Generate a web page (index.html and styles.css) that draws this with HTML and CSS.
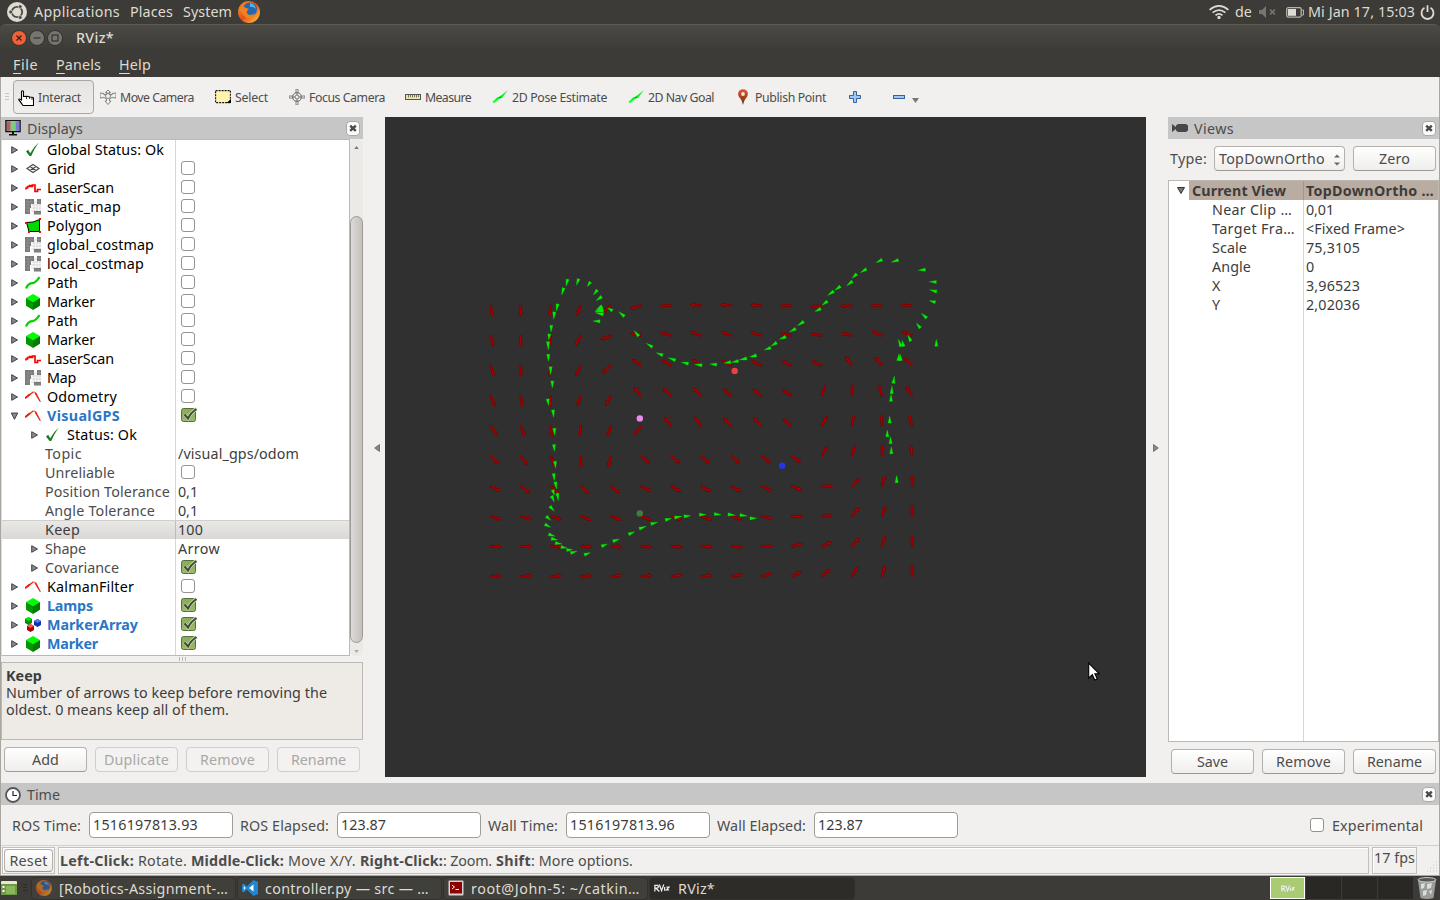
FILE: index.html
```html
<!DOCTYPE html>
<html lang="en">
<head>
<meta charset="utf-8">
<title>RViz*</title>
<link rel="stylesheet" href="styles.css">
</head>
<body>
<svg class="defs" aria-hidden="true">
  <defs>
    <linearGradient id="flame" x1="0" y1="0" x2="1" y2="1"><stop offset="0" stop-color="#f7931e"/><stop offset=".5" stop-color="#e8501b"/><stop offset="1" stop-color="#ffd23c"/></linearGradient>
    <linearGradient id="pinFill" x1="0" y1="0" x2="0" y2="1"><stop offset="0" stop-color="#e8532f"/><stop offset="1" stop-color="#5a3510"/></linearGradient>
    <linearGradient id="okFill" x1="0" y1="0" x2="0" y2="1"><stop offset="0" stop-color="#8aa95c"/><stop offset="1" stop-color="#9cbb6c"/></linearGradient>
  </defs>
  <symbol id="i-check" viewBox="0 0 16 16"><path d="M1 9.500L3.200 7.800L5.200 11.200Q9 4.500 13.800 .5Q9 7 6.200 14L4.600 14Z" fill="#1d7a1d"/></symbol>
  <symbol id="i-grid" viewBox="0 0 16 16"><path d="M8 3.500L14 7.500L8 11.500L2 7.500ZM5 5.500L11 9.500M11 5.500L5 9.500" fill="none" stroke="#4a4a4a" stroke-width="1.200"/></symbol>
  <symbol id="i-laser" viewBox="0 0 16 16"><path d="M1 9.500V8H2.500V6.500H4.500V5.500H6V6.500H7.500V5H10V11.500H12.500V9.500H16" fill="none" stroke="#f00" stroke-width="1.700"/></symbol>
  <symbol id="i-map" viewBox="0 0 16 16"><path d="M9 3H12M7 6H16M6 9H16M6 12H16M9 3V15M12 5V13M15 5V13" stroke="#ccc" stroke-width=".7"/><path d="M0 0H9V5H6V9H5V15H0ZM12 0H16V5H12ZM9 12H16V15.500H9Z" fill="#787878"/><path d="M0 3H9M0 6H6M0 9H5M0 12H5M3 0V15M6 0V5M12 2.500H16M14 0V5M9 14H16" stroke="#9c9c9c" stroke-width=".5"/></symbol>
  <symbol id="i-poly" viewBox="0 0 16 16"><path d="M1.500 4.500Q8 5 14.500 1.500V13.500H4Z" fill="#00d800" stroke="#000"/><path d="M0 4H2V6H0ZM14 0H16V2H14ZM3 13H5V15H3ZM14 13H16V15H14Z" fill="#f00"/></symbol>
  <symbol id="i-path" viewBox="0 0 16 16"><path d="M1 13.500Q3 8.500 7 8.200T14.500 2" fill="none" stroke="#00d400" stroke-width="2.300"/></symbol>
  <symbol id="i-cube" viewBox="0 0 16 16"><path d="M8 0L15 4L8 8L1 4Z" fill="#0f0"/><path d="M1 4L8 8V16L1 11.800Z" fill="#009800"/><path d="M15 4L8 8V16L15 11.800Z" fill="#007c00"/></symbol>
  <symbol id="i-odom" viewBox="0 0 16 16"><path d="M.5 9L8.500 2.800" stroke="#e8210c" stroke-width="1.200"/><path d="M9 2.200L11.500 4L16 13L14.500 12.500L10 5Z" fill="#e8210c"/><path d="M0 9.200L5 5.300" stroke="#e8210c" stroke-width="1.900"/></symbol>
  <symbol id="i-cubes" viewBox="0 0 16 16"><path d="M3.500 0L7 2V6L3.500 8L0 6V2Z" fill="#009000"/><path d="M3.500 0L7 2L3.500 4L0 2Z" fill="#0e0"/><path d="M12.500 2L16 4V8L12.500 10L9 8V4Z" fill="#13a"/><path d="M12.500 2L16 4L12.500 6L9 4Z" fill="#57f"/><path d="M5.500 7L9 9V13L5.500 15L2 13V9Z" fill="#a00"/><path d="M5.500 7L9 9L5.500 11L2 9Z" fill="#f55"/></symbol>
  <symbol id="i-x" viewBox="0 0 14 15"><rect x=".5" y=".5" width="13" height="14" rx="3.500" fill="#fbfbfa" stroke="#a9a9a9"/><path d="M4.200 4.700L9.800 9.800M9.800 4.700L4.200 9.800" stroke="#4a4a4a" stroke-width="2.500"/></symbol>
  <symbol id="i-nav" viewBox="0 0 16 16"><path d="M.5 13L5.500 8L7 8L15.800 1.300L10 9L8 9.300L2 14Z" fill="#0f2"/><path d="M6 8.500L9.500 7L8.500 9.500Z" fill="#0a0"/></symbol>
  <symbol id="i-fox" viewBox="0 0 22 22"><circle cx="11" cy="11" r="11" fill="url(#flame)"/><circle cx="12" cy="8.500" r="7" fill="#2566ad"/><path d="M12 2Q17 3 18 8Q15 5 12 6Z" fill="#5db0e4"/><path d="M1 6Q5 4 8 7L11 8L9 10Q8 13 12 14Q15 14 17 12Q15 18 9 17Q3 14 1 6Z" fill="#f08020"/></symbol>
  <symbol id="i-rviz" viewBox="0 0 18 10"><path d="M1 9V2H4Q6 3 4 5H2L6 9M6 1L8.500 8L11 1M12 4V8M14 4H17L14 7H17" fill="none" stroke="#eee" stroke-width="1.400"/></symbol>
</svg>

<header class="panel">
  <svg class="ubuntu" viewBox="0 0 20 20"><circle cx="10" cy="10" r="10" fill="#dfdbd2"/><circle cx="10" cy="10" r="5.200" fill="none" stroke="#4a4945" stroke-width="1.800"/><path d="M10 10L2 10M10 10L14 3M10 10L14 17" stroke="#dfdbd2" stroke-width="1"/><g fill="#4a4945" stroke="#dfdbd2" stroke-width=".7"><circle cx="3.700" cy="10" r="1.900"/><circle cx="13.200" cy="4.600" r="1.900"/><circle cx="13.200" cy="15.400" r="1.900"/></g></svg>
  <span class="fit m-apps" data-w="86">Applications</span>
  <span class="fit m-places" data-w="43">Places</span>
  <span class="fit m-system" data-w="49">System</span>
  <svg class="fox" viewBox="0 0 22 22"><use href="#i-fox"/></svg>
  <div class="tray">
    <svg width="20" height="14" viewBox="0 0 20 14" fill="none" stroke="#dfdbd2" stroke-width="1.700"><path d="M.6 4.800Q10-3 19.400 4.800M3.600 7.700Q10 2.400 16.400 7.700M6.500 10.400Q10 7.200 13.500 10.400"/><circle cx="10" cy="12.500" r=".8"/></svg>
    <span class="fit" data-w="17">de</span>
    <svg class="snd" width="18" height="12" viewBox="0 0 18 12"><path d="M0 4H3L7 0V12L3 8H0Z" fill="#77756f"/><path d="M11 3.500L16 8.500M16 3.500L11 8.500" stroke="#77756f" stroke-width="1.700"/></svg>
    <svg class="bat" width="18" height="11" viewBox="0 0 18 11"><rect x=".7" y=".7" width="14.500" height="9.400" rx="1.500" fill="none" stroke="#b5b2aa" stroke-width="1.300"/><rect x="2" y="2" width="8" height="6.800" fill="#dfdbd2"/><path d="M16 3H17.500V8H16" fill="none" stroke="#b5b2aa"/></svg>
    <span class="fit" data-w="107">Mi Jan 17, 15:03</span>
    <svg class="pow" width="15" height="15" viewBox="0 0 15 15" fill="none" stroke="#dfdbd2" stroke-width="1.800"><path d="M4.500 2.800A6 6 0 1 0 10.500 2.800M7.500 .3V7"/></svg>
  </div>
</header>

<div class="titlebar">
  <svg width="53" height="16" viewBox="0 0 53 16"><circle cx="8" cy="8" r="7.500" fill="#ee6139" stroke="#33322e"/><path d="M5.500 5.500L10.500 10.500M10.500 5.500L5.500 10.500" stroke="#3a2018" stroke-width="1.200"/><g fill="#77766e" stroke="#33322e"><circle cx="26" cy="8" r="7.500"/><circle cx="44" cy="8" r="7.500"/></g><path d="M22.500 8H29.500" stroke="#33322e" stroke-width="1.200"/><rect x="41" y="5" width="6" height="6" fill="none" stroke="#33322e" stroke-width="1.200"/></svg>
  <span class="fit" data-w="38">RViz*</span>
</div>
<nav class="menubar">
  <span class="fit" data-w="25"><u>F</u>ile</span>
  <span class="fit" data-w="45"><u>P</u>anels</span>
  <span class="fit" data-w="32"><u>H</u>elp</span>
</nav>

<main class="window">
  <div class="toolbar">
    <div class="grip"></div>
    <div class="tool active"><svg viewBox="0 0 16 16"><path d="M3.500 9V1.500Q4.500 0 5.500 1.500V6.500L9 6.200L12 7L15 7.500Q15.800 8 15.500 10V15.500H5L1 10Q0 8 3.500 10Z" fill="#fff" stroke="#000" stroke-width="1.100"/><path d="M8.500 6.500V9M11.500 7V9M14 7.500V10M1 10L4 14" stroke="#000" stroke-width=".8"/></svg><span class="fit" data-w="43">Interact</span></div>
    <div class="tool"><svg viewBox="0 0 16 16" fill="none" stroke="#777" stroke-width=".9"><path d="M8 1L10.500 3.500H9V5L12 6V4.500L16 4V9L12 8.500L9.500 10V12H11L8 15.500L5 12H6.500V10L4 8.500L0 9V4L4 4.500V6L7 5V3.500H5.500Z"/><circle cx="8" cy="7" r="2.500"/></svg><span class="fit" data-w="74">Move Camera</span></div>
    <div class="tool"><svg viewBox="0 0 16 16"><rect x=".6" y="1.600" width="14.800" height="12" fill="#fff3ae" stroke="#111" stroke-width="1.100" stroke-dasharray="2 1"/><path d="M16 10V14H11.500Z"/></svg><span class="fit" data-w="33">Select</span></div>
    <div class="tool snug"><svg viewBox="0 0 16 16" fill="none" stroke="#777"><circle cx="8" cy="8" r="4.500"/><circle cx="8" cy="8" r="2" /><path d="M7 0H9V5H7ZM7 11H9V16H7ZM0 7H5V9H0ZM11 7H16V9H11Z" stroke-width=".9"/></svg><span class="fit" data-w="76">Focus Camera</span></div>
    <div class="tool"><svg viewBox="0 0 16 16"><rect x=".5" y="5.500" width="15" height="5" fill="#efe5a0" stroke="#555"/><path d="M3.500 6V8.500M5.500 6V8M7.500 6V8.500M9.500 6V8M11.500 6V8.500M13.500 6V8" stroke="#555" stroke-width=".8"/></svg><span class="fit" data-w="46">Measure</span></div>
    <div class="tool"><svg viewBox="0 0 16 16"><use href="#i-nav"/></svg><span class="fit" data-w="95">2D Pose Estimate</span></div>
    <div class="tool"><svg viewBox="0 0 16 16"><use href="#i-nav"/></svg><span class="fit" data-w="66">2D Nav Goal</span></div>
    <div class="tool"><svg viewBox="0 0 16 16"><path d="M8 16Q6.800 10.500 4 8Q2 4 4.500 1.500Q8-1 11.500 1.500Q14 4 12 8Q9.200 10.500 8 16Z" fill="url(#pinFill)"/><circle cx="8" cy="5" r="1.900" fill="#f3e5df"/></svg><span class="fit" data-w="71">Publish Point</span></div>
    <svg class="plus" viewBox="0 0 12 12"><path d="M4.500 .5H7.500V4.500H11.500V7.500H7.500V11.500H4.500V7.500H.5V4.500H4.500Z" fill="#a9c6ea" stroke="#2f62aa"/></svg>
    <svg class="minus" viewBox="0 0 12 4"><rect x=".5" y=".5" width="11" height="3" fill="#a9c6ea" stroke="#2f62aa"/></svg>
    <svg class="drop" viewBox="0 0 7 5"><path d="M0 0H7L3.500 5Z" fill="#777"/></svg>
  </div>

  <div class="middle">
    <section class="dock left">
      <div class="dockhead"><svg width="16" height="16" viewBox="0 0 16 16"><rect x="1" y=".5" width="14" height="11" fill="#fff" stroke="#111" stroke-width="1.500"/><rect x="1.800" y="1.300" width="4" height="9.500" fill="#b65c66"/><rect x="5.800" y="1.300" width="4.500" height="9.500" fill="#77d077"/><rect x="10.300" y="1.300" width="4" height="9.500" fill="#7b7bd6"/><path d="M7 12H9V14H12V15.500H4V14H7Z" fill="#111"/></svg><span class="fit" data-w="56">Displays</span><svg class="close" viewBox="0 0 14 15"><use href="#i-x"/></svg></div>
      <div class="treewrap">
        <div class="tree" id="displays"></div>
        <div class="scroll"><svg viewBox="0 0 6 4"><path d="M0 4H6L3 0Z" fill="#777"/></svg><div class="thumb"></div><svg viewBox="0 0 6 4"><path d="M0 0H6L3 4Z" fill="#aaa"/></svg></div>
      </div>
      <div class="split"><i></i><i></i><i></i></div>
      <div class="help">
        <b class="fit" data-w="36">Keep</b>
        <span class="fit" data-w="321">Number of arrows to keep before removing the</span>
        <span class="fit" data-w="223">oldest. 0 means keep all of them.</span>
      </div>
      <div class="buttons">
        <div class="btn"><span class="fit" data-w="27">Add</span></div>
        <div class="btn off"><span class="fit" data-w="65">Duplicate</span></div>
        <div class="btn off"><span class="fit" data-w="55">Remove</span></div>
        <div class="btn off"><span class="fit" data-w="55">Rename</span></div>
      </div>
    </section>
    <div class="gutter"><svg class="gl" viewBox="0 0 6 8"><path d="M5.500 .5V7.500L.7 4Z" fill="#888" stroke="#555" stroke-width=".7"/></svg></div>
    <svg class="scene" id="scene" viewBox="385 117 761 660"></svg>
    <div class="gutter"><svg class="gr" viewBox="0 0 6 8"><path d="M.5 .5V7.500L5.300 4Z" fill="#888" stroke="#555" stroke-width=".7"/></svg></div>
    <section class="dock right">
      <div class="dockhead"><svg width="16" height="16" viewBox="0 0 16 16"><path d="M0 4L4 7V5.500L6 4H14L16 5.500V10.500L14 12H6L4 10.500V9L0 12Z" fill="#484848"/></svg><span class="fit" data-w="40">Views</span><svg class="close" viewBox="0 0 14 15"><use href="#i-x"/></svg></div>
      <div class="typerow">
        <span class="fit" data-w="37">Type:</span>
        <div class="btn combo"><span class="fit" data-w="106">TopDownOrtho</span><svg viewBox="0 0 6 12"><path d="M0 3.500H6L3 .5ZM0 8.500H6L3 11.500Z" fill="#666"/></svg></div>
        <div class="btn"><span class="fit" data-w="31">Zero</span></div>
      </div>
      <div class="props" id="views"></div>
      <div class="buttons">
        <div class="btn"><span class="fit" data-w="31">Save</span></div>
        <div class="btn"><span class="fit" data-w="55">Remove</span></div>
        <div class="btn"><span class="fit" data-w="55">Rename</span></div>
      </div>
    </section>
  </div>

  <div class="dockhead time"><svg width="16" height="16" viewBox="0 0 16 16"><circle cx="8" cy="8" r="7" fill="#fff" stroke="#555" stroke-width="1.800"/><path d="M8 4V8.500H12" fill="none" stroke="#222" stroke-width="1.200"/></svg><span class="fit" data-w="33">Time</span><svg class="close" viewBox="0 0 14 15"><use href="#i-x"/></svg></div>
  <div class="timerow">
    <span class="fit" data-w="69">ROS Time:</span><div class="field"><span class="fit" data-w="105">1516197813.93</span></div>
    <span class="fit" data-w="89">ROS Elapsed:</span><div class="field"><span class="fit" data-w="45">123.87</span></div>
    <span class="fit" data-w="70">Wall Time:</span><div class="field"><span class="fit" data-w="105">1516197813.96</span></div>
    <span class="fit" data-w="89">Wall Elapsed:</span><div class="field"><span class="fit" data-w="45">123.87</span></div>
    <span class="box exp"></span><span class="fit" data-w="91">Experimental</span>
  </div>
  <div class="status">
    <div class="cell reset"><div class="btn"><span class="fit" data-w="38">Reset</span></div></div>
    <div class="cell msg"><b class="fit" data-w="74">Left-Click:</b><span class="fit" data-w="49">Rotate.</span><b class="fit" data-w="93">Middle-Click:</b><span class="fit" data-w="68">Move X/Y.</span><b class="fit tight" data-w="83">Right-Click:</b><span class="fit" data-w="49">: Zoom.</span><b class="fit tight" data-w="35">Shift</b><span class="fit" data-w="102">: More options.</span></div>
    <div class="cell fps"><span class="fit" data-w="41">17 fps</span></div>
    <svg class="sizer" viewBox="0 0 12 12"><path d="M10 1H12M7 4H12M4 7H12M1 10H12" stroke="#cbc9c5" stroke-dasharray="1 2"/></svg>
  </div>
</main>

<footer class="taskbar">
  <svg class="desk" viewBox="0 0 16 14"><rect x="0" y="0" width="16" height="14" rx="1" fill="#e9e6d4"/><rect x="0" y="3" width="16" height="11" fill="#6f9a45"/><rect x="5" y="5" width="9" height="8" fill="#8bb75c"/><path d="M1.500 5H3.500V7H1.500ZM1.500 9H3.500V11H1.500Z" fill="#fff"/></svg>
  <div class="grip dark"></div>
  <div class="task"><svg class="dim" viewBox="0 0 22 22"><use href="#i-fox"/></svg><span class="fit" data-w="169">[Robotics-Assignment-…</span></div>
  <div class="task"><svg viewBox="0 0 16 16"><path d="M11.500 0L16 2V14L11.500 16L5 9.800L1.500 12.500L0 11.500V4.500L1.500 3.500L5 6.200Z" fill="#1f86d2"/><path d="M11.500 4.500V11.500L7 8ZM1.800 6V10L3.800 8Z" fill="#fff"/></svg><span class="fit" data-w="164">controller.py — src — …</span></div>
  <div class="task"><svg viewBox="0 0 16 16"><rect x=".6" y=".6" width="14.800" height="14.800" rx="1" fill="#ddd" stroke="#888"/><rect x="2" y="2" width="12" height="11.500" fill="#8d0000"/><path d="M4 5L6.500 7L4 9M7.500 9.500H11" fill="none" stroke="#fff"/></svg><span class="fit" data-w="169">root@John-5: ~/catkin…</span></div>
  <div class="task cur"><svg class="rv" viewBox="0 0 18 10"><use href="#i-rviz"/></svg><span class="fit" data-w="37">RViz*</span></div>
  <div class="spaces"><div class="ws on"><svg viewBox="0 0 18 10"><use href="#i-rviz"/></svg></div><div class="ws"></div><div class="ws"></div><div class="ws"></div></div>
  <svg class="trash" viewBox="0 0 20 22"><path d="M1 3L3.500 21Q10 23 16.500 21L19 3Z" fill="#9a9c9a"/><ellipse cx="10" cy="2.800" rx="9" ry="2.200" fill="#555" stroke="#ccc"/><path d="M4 7L8 6L7 11L4 12ZM10 7L15 6L14 11L10 12ZM6 14L10 13L9 18L6 19ZM12 14L15 13L14 18Z" fill="#dcdedc"/></svg>
</footer>
<svg class="cursor" viewBox="0 0 12 19"><path d="M.7 1V16L4.300 12.700L6.800 18L9.300 16.900L6.900 11.800H11.300Z" fill="#fff" stroke="#000" stroke-width="1.100"/></svg>
<script src="app.js"></script>
</body>
</html>
```
FILE: styles.css
```css
* { box-sizing: border-box; }
body { margin: 0; width: 1440px; height: 900px; overflow: hidden; display: flex; flex-direction: column; background: #3c3b37; font: 14.3px/19px "Noto Sans", "Open Sans", sans-serif; color: #4c4c4c; }
svg { flex: none; display: block; }
.defs { position: absolute; width: 0; height: 0; }
.fit { display: inline-block; white-space: nowrap; flex: none; }

.panel { height: 24px; flex: none; display: flex; align-items: center; padding: 0 5px 0 7px; color: #dfdbd2; }
.panel .fit { padding-bottom: 2px; }
.ubuntu { width: 20px; height: 20px; margin-right: 7px; }
.m-apps { margin-right: 10px; }
.m-places { margin-right: 10px; }
.m-system { margin-right: 6px; }
.fox { width: 22px; height: 22px; }
.tray { margin-left: auto; display: flex; align-items: center; }
.tray .fit { margin-left: 6px; }
.snd { margin-left: 7px; }
.bat { margin: 0 -2px 0 9px; }
.pow { margin-left: 5px; }

.titlebar { height: 26px; flex: none; display: flex; align-items: center; gap: 12px; padding-left: 11px; border-top: 1px solid #5b5a54; border-radius: 6px 6px 0 0; background: linear-gradient(#4b4a44, #3c3b37); color: #dfdbd2; font-weight: 500; }
.menubar { height: 27px; flex: none; display: flex; align-items: center; gap: 18px; padding: 2px 0 0 13px; color: #dfdbd2; }
.menubar u { text-underline-offset: 3px; }

.window { height: 799px; flex: none; border-left: 1px solid #a9a6a0; border-right: 1px solid #a9a6a0; border-bottom: 1px solid #a9a6a0; background: #f1f0ee; display: flex; flex-direction: column; }
.toolbar { height: 40px; flex: none; display: flex; align-items: center; font-size: 12.3px; }
.grip { width: 4px; height: 8px; margin: 0 4px; background: repeating-linear-gradient(#c8c6c2 0 1px, transparent 1px 3px); }
.tool { display: flex; align-items: center; gap: 4px; margin-right: 21px; }
.tool.snug { margin-right: 20px; }
.tool svg { width: 16px; height: 16px; }
.tool.active { width: 81px; height: 34px; padding: 1px 0 0 4px; margin-right: 6px; border: 1px solid #aaa7a2; border-radius: 4px; background: linear-gradient(#e5e4e2, #efeeec); }
.plus { width: 12px; height: 12px; margin-left: 2px; }
.minus { width: 12px; height: 4px; margin-left: 32px; }
.drop { width: 7px; height: 5px; margin: 6px 0 0 7px; }

.middle { height: 666px; flex: none; display: flex; }
.dock { display: flex; flex-direction: column; }
.left { width: 362px; }
.right { width: 271px; }
.dockhead { height: 22px; flex: none; display: flex; align-items: center; gap: 6px; padding: 0 3px 0 4px; background: #c6c6c6; }
.dockhead .close { width: 14px; height: 15px; margin-left: auto; }
.treewrap { height: 517px; display: flex; }
.tree { width: 349px; border: 1px solid #bcb9b5; border-left-color: #ddd; background: linear-gradient(90deg, transparent 173px, #d8d6d3 173px 174px, transparent 174px) #fff; }
.row { height: 19px; display: flex; align-items: center; }
.row.sel { background: linear-gradient(90deg, transparent 173px, #bfbdb9 173px 174px, transparent 174px), linear-gradient(#e9e8e6, #d9d8d5); border-top: 1px solid #d0ceca; }
.name { width: 174px; flex: none; display: flex; align-items: center; }
.name .fit, .val .fit { position: relative; top: -.5px; }
.val .fit, .sel .fit { color: #3c3c3c; }
.tri { width: 7px; height: 8px; margin: 0 7px 0 9px; }
.deep .tri { margin: 0 7px 0 29px; }
.ico { width: 16px; height: 16px; margin-right: 6px; }
.top { color: #000; }
.on-name { color: #2a76c6; font-weight: bold; }
.val { padding-left: 2px; display: flex; align-items: center; }
.box { width: 14px; height: 14px; flex: none; border: 1px solid #96938f; border-radius: 3px; background: #fff; }
.val .box { margin: -1px 0 0 3px; }
.val .tick { width: 17px; height: 16px; margin: -2px 0 0 3px; }
.scroll { width: 13px; display: flex; flex-direction: column; align-items: center; background: #eceae7; border-radius: 6px; }
.scroll svg { width: 5px; height: 3px; margin: 7px 0 5px; }
.thumb { width: 13px; height: 427px; flex: none; margin-top: 62px; border: 1px solid #9d9993; border-radius: 7px; background: linear-gradient(90deg, #dddad7, #c4c0bb); }
.split { height: 6px; display: flex; justify-content: center; gap: 2px; padding-top: 1px; }
.split i { width: 1px; height: 4px; background: #bbb9b5; }
.help { height: 78px; padding: 4px; border: 1px solid #bcb9b5; background: #eeebe7; line-height: 17px; color: #3c3c3c; display: flex; flex-direction: column; align-items: flex-start; }
.buttons { display: flex; gap: 8px; padding: 7px 3px 0; }
.btn { width: 83px; height: 25px; display: flex; align-items: center; justify-content: center; border: 1px solid #b4b1ad; border-bottom-color: #9c9995; border-radius: 4px; background: linear-gradient(#fff, #efeeec); }
.btn.off { color: #a9a8a6; border-color: #d0ceca; background: #f3f2f0; }
.gutter { width: 22px; flex: none; }
.gl { width: 6px; height: 8px; margin: 327px 0 0 11px; }
.gr { width: 6px; height: 8px; margin: 327px 0 0 7px; }
.scene { width: 761px; height: 660px; background: #303030; }

.typerow { height: 41px; display: flex; align-items: center; padding: 0 0 2px 2px; }
.combo { width: 131px; margin: 0 8px 0 7px; justify-content: space-between; padding: 0 4px; }
.combo svg { width: 6px; height: 12px; margin-top: 3px; }
.props { height: 562px; border: 1px solid #bcb9b5; background: linear-gradient(90deg, transparent 134px, #d8d6d3 134px 135px, transparent 135px) #fff; color: #3c3c3c; }
.prow { height: 19px; display: flex; align-items: center; }
.pname { width: 137px; padding-left: 43px; flex: none; }
.prow.head { font-weight: bold; margin-left: 20px; background: linear-gradient(90deg, transparent 114px, #a3978e 114px 115px, transparent 115px) #bbaca2; }
.prow.head svg { width: 8px; height: 7px; margin-left: -12px; margin-right: 4px; }
.prow.head .pname { width: 117px; padding-left: 3px; }

.time { padding-top: 1px; }
.timerow { height: 40px; flex: none; display: flex; align-items: center; padding-left: 11px; }
.field { width: 144px; height: 26px; margin: 0 7px 1px 8px; padding: 2px 4px 2px 3px; border: 1px solid #9f9b96; border-radius: 4px; background: #fff; color: #3c3c3c; }
.exp { margin: 0 8px 1px 345px; }
.status { height: 30px; flex: none; display: flex; padding: 1px 0 1px 1px; border-top: 1px solid #d2d0cd; align-items: flex-start; }
.cell { height: 27px; border: 1px solid #c2c0bc; box-shadow: inset 1px 1px #fff; display: flex; align-items: center; }
.reset { width: 53px; padding-left: 1px; margin-right: 3px; }
.reset .btn { width: 49px; height: 23px; }
.msg { width: 1311px; padding-left: 1px; gap: 4px; margin-right: 3px; }
.tight { margin-right: -4px; }
.fps { width: 45px; padding: 0 0 7px 1px; }
.sizer { width: 12px; height: 12px; margin: 14px 0 0 9px; }

.taskbar { height: 24px; flex: none; display: flex; align-items: center; background: #3c3b37; color: #dfdbd2; }
.desk { width: 16px; height: 14px; margin-left: 1px; }
.grip.dark { margin: 0 4px 0 6px; background: repeating-linear-gradient(#2b2a27 0 1px, transparent 1px 3px); }
.task { width: 205px; height: 23px; margin-right: 1px; display: flex; align-items: center; gap: 7px; padding-left: 4px; border: 1px solid #32312d; border-radius: 4px; background: #403f3a; }
.task svg { width: 16px; height: 16px; }
.task .dim { opacity: .65; }
.task.cur { width: 206px; background: #2d2c29; }
.task.cur .fit { margin-left: 1px; }
.task.cur .rv { height: 10px; }
.spaces { display: flex; gap: 1px; margin: 0 4px 0 414px; }
.ws { width: 35px; height: 22px; background: #292825; display: flex; align-items: center; justify-content: center; }
.ws.on { background: #a9cb73; border: 1px solid #fff; }
.ws svg { width: 14px; height: 9px; }
.trash { width: 20px; height: 22px; }
.cursor { position: absolute; left: 1088px; top: 662px; width: 12px; height: 19px; }
```
FILE: app.js
```js
// Display tree: [depth, arrow, icon, name, width, style, value, valueWidth]
const displays = [
  [0, 'r', 'check', 'Global Status: Ok', 117, 'top'],
  [0, 'r', 'grid', 'Grid', 28, 'top', false],
  [0, 'r', 'laser', 'LaserScan', 67, 'top', false],
  [0, 'r', 'map', 'static_map', 74, 'top', false],
  [0, 'r', 'poly', 'Polygon', 55, 'top', false],
  [0, 'r', 'map', 'global_costmap', 107, 'top', false],
  [0, 'r', 'map', 'local_costmap', 97, 'top', false],
  [0, 'r', 'path', 'Path', 31, 'top', false],
  [0, 'r', 'cube', 'Marker', 48, 'top', false],
  [0, 'r', 'path', 'Path', 31, 'top', false],
  [0, 'r', 'cube', 'Marker', 48, 'top', false],
  [0, 'r', 'laser', 'LaserScan', 67, 'top', false],
  [0, 'r', 'map', 'Map', 29, 'top', false],
  [0, 'r', 'odom', 'Odometry', 70, 'top', false],
  [0, 'd', 'odom', 'VisualGPS', 73, 'on-name', true],
  [1, 'r', 'check', 'Status: Ok', 70, 'top'],
  [1, '', '', 'Topic', 37, '', '/visual_gps/odom', 121],
  [1, '', '', 'Unreliable', 70, '', false],
  [1, '', '', 'Position Tolerance', 125, '', '0,1', 20],
  [1, '', '', 'Angle Tolerance', 110, '', '0,1', 20],
  [1, '', '', 'Keep', 35, 'sel', '100', 25],
  [1, 'r', '', 'Shape', 41, '', 'Arrow', 42],
  [1, 'r', '', 'Covariance', 74, '', true],
  [0, 'r', 'odom', 'KalmanFilter', 87, 'top', false],
  [0, 'r', 'cube', 'Lamps', 46, 'on-name', true],
  [0, 'r', 'cubes', 'MarkerArray', 91, 'on-name', true],
  [0, 'r', 'cube', 'Marker', 51, 'on-name', true]
];
const arrows = { r: 'M.7 .7V7.300L6.500 4Z', d: 'M.3 1H6.700L3.500 7.300Z' };
const fit = (text, w) => `<span class="fit" data-w="${w}">${text}</span>`;
const tick = '<svg class="tick" viewBox="0 0 17 16"><rect x=".5" y="1.500" width="14" height="13" rx="2" fill="url(#okFill)" stroke="#55703a"/><path d="M3.500 7.500L7 11.500Q9.500 6 15.500 2" fill="none" stroke="#c9dcae" stroke-width="3.400"/><path d="M3.500 7.500L7 11.500Q9.500 6 15.500 2" fill="none" stroke="#3f4a35" stroke-width="2"/></svg>';

document.getElementById('displays').innerHTML = displays.map(([depth, arrow, icon, name, w, style, value, vw]) => {
  const tri = `<svg class="tri" viewBox="0 0 7 8">${arrow ? `<path d="${arrows[arrow]}" fill="#8a8a8a" stroke="#333" stroke-width=".9"/>` : ''}</svg>`;
  const ico = icon ? `<svg class="ico" viewBox="0 0 16 16"><use href="#i-${icon}"/></svg>` : '';
  let val = '';
  if (value === true) val = tick;
  else if (value === false) val = '<span class="box"></span>';
  else if (value) val = fit(value, vw);
  return `<div class="row ${depth ? 'deep' : ''} ${style}"><div class="name">${tri}${ico}${fit(name, w)}</div><div class="val">${val}</div></div>`;
}).join('');

const views = [
  ['Near Clip …', 80, '0,01', 28], ['Target Fra…', 83, '&lt;Fixed Frame&gt;', 99],
  ['Scale', 35, '75,3105', 54], ['Angle', 39, '0', 8], ['X', 9, '3,96523', 54], ['Y', 9, '2,02036', 54]
];
document.getElementById('views').innerHTML =
  '<div class="prow head"><svg viewBox="0 0 8 7"><path d="M.5 .5H7.500L4 6.500Z" fill="#777" stroke="#333"/></svg>' +
  `<div class="pname">${fit('Current View', 94)}</div>${fit('TopDownOrtho …', 128)}</div>` +
  views.map(([n, w, v, vw]) => `<div class="prow"><div class="pname">${fit(n, w)}</div>${fit(v, vw)}</div>`).join('');

// Vector field: heading in degrees for each grid point, row by row
const field = [
  [80, 90, 97, 114, 142, 163, 178, 184, 185, 182, 178, 173, 176, 179, 182],
  [76, 90, 98, 118, 160, 193, 197, 200, 200, 197, 190, 188, 192, 204, 202],
  [72, 87, 97, 117, 140, 217, 211, 216, 211, 206, 206, 204, 236, 230, 225],
  [68, 81, 93, 108, 120, 229, 223, 225, 220, 218, 211, 287, 273, 255, 238],
  [55, 68, 83, 97, 110, 126, 233, 232, 226, 225, 220, 298, 282, 268, 255],
  [43, 54, 68, 89, 105, 39, 40, 40, 41, 38, 36, 301, 288, 275, 264],
  [28, 36, 42, 45, 40, 30, 30, 30, 30, 28, 22, 0, 316, 288, 270],
  [18, 18, 18, 22, 20, 22, 22, 20, 18, 13, 2, 355, 310, 290, 270],
  [2, 2, 2, 3, 4, 4, 4, 3, 3, 0, 347, 337, 311, 288, 270],
  [-4, -5, -4, -4, -6, -6, -7, -6, -10, -14, -25, -40, -58, -73, -90]
];
// Trajectory arrows: offset x, offset y, then base/tip pairs in thirds of a pixel
const tracks = [
  [470, 240, [293,118,288,138, 326,117,319,136, 361,126,352,140, 382,150,370,165, 395,170,378,182, 281,144,275,165, 263,192,259,214, 253,216,251,238, 244,256,243,276, 238,282,236,300, 234,305,235,330, 235,343,235,364, 242,380,242,404, 247,423,247,444, 233,477,236,497, 249,510,251,532, 396,198,378,210, 398,204,376,214, 400,212,375,215, 400,223,376,218, 390,244,369,243, 427,212,413,204, 463,229,446,215, 506,288,492,272, 547,321,529,310, 578,346,559,338, 616,361,595,353, 655,371,634,367, 696,376,674,373]],
  [700, 240, [50,374,30,372, 92,366,72,370, 115,363,95,367, 140,355,118,360, 169,346,149,351, 212,323,193,330, 230,308,213,318, 257,290,238,298, 287,266,268,276, 311,245,292,257, 362,206,345,215, 382,184,366,196, 401,154,383,166, 421,139,404,151, 457,124,440,137, 470,102,456,115, 499,87,481,98, 546,59,528,68, 595,60,574,67, 676,89,655,91, 709,126,688,125, 710,155,689,149, 706,187,688,182, 680,234,664,220, 661,264,649,249, 632,303,624,285, 603,319,595,298, 611,319,606,301, 709,319,709,298, 595,362,597,342, 602,362,600,342, 580,430,583,408, 575,461,576,438, 573,484,573,463]],
  [470, 410, [253,55,254,76, 252,104,253,124, 255,154,257,175, 251,191,253,212, 256,216,260,237, 262,250,265,272, 248,240,253,256, 245,258,253,276, 240,289,253,304, 229,319,242,331, 225,343,242,352, 236,373,255,379, 244,386,263,390, 256,399,276,402, 273,411,291,414, 290,420,308,419, 302,429,321,424, 343,434,361,428, 395,409,412,402, 429,394,448,387, 476,373,494,365, 508,356,529,349, 543,342,563,337, 586,330,605,325, 614,323,636,319, 642,319,662,317, 688,314,708,314]],
  [700, 410, [43,312,63,314, 84,313,106,316, 120,315,142,318, 150,325,170,325, 569,39,569,18, 562,80,562,60, 572,101,571,80, 574,131,574,110, 590,218,590,196]]
];
let scene = '';
field.forEach((row, r) => row.forEach((deg, c) => {
  scene += `<g transform="translate(${490.6 + c * 30.1} ${305.5 + r * 30.1}) rotate(${deg})"><path d="M0-.9H7.500V-1.900L11 0L7.500 1.900V.9H0Z" fill="#b40000" stroke="#780000" stroke-width=".8"/></g>`;
}));
tracks.forEach(([ox, oy, p]) => {
  for (let i = 0; i < p.length; i += 4) {
    const x = ox + p[i] / 3, y = oy + p[i + 1] / 3, tx = ox + p[i + 2] / 3, ty = oy + p[i + 3] / 3;
    const len = Math.hypot(tx - x, ty - y), nx = -(ty - y) / len * 1.6, ny = (tx - x) / len * 1.6;
    scene += `<path d="M${x + nx} ${y + ny}L${x - nx} ${y - ny}L${tx} ${ty}Z" fill="#00f000" stroke="#00e000" stroke-width=".3"/>`;
  }
});
[[639.8, 418.4, '#e88cf0'], [734.7, 371, '#ee4040'], [639.8, 513.4, '#3c8040'], [782.1, 465.8, '#2038e8']].forEach(([x, y, c]) => {
  scene += `<circle cx="${x}" cy="${y}" r="3.200" fill="${c}"/>`;
});
document.getElementById('scene').innerHTML = scene;

// Spread each label over its column width
document.querySelectorAll('.fit').forEach(el => {
  const w = Number(el.dataset.w);
  const gap = (w - el.getBoundingClientRect().width) / el.textContent.length;
  el.style.letterSpacing = gap.toFixed(3) + 'px';
  el.style.width = w + 'px';
});
```
